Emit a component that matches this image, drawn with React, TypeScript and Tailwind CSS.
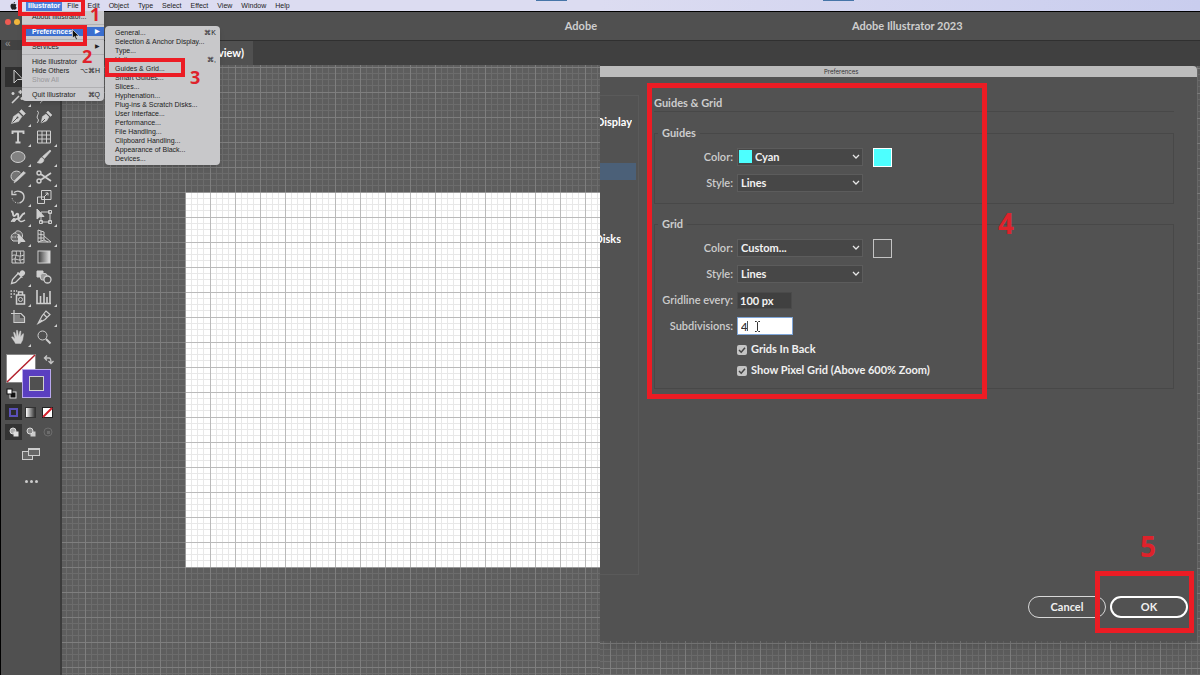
import type { ReactNode } from "react";

const menuBar = ["File", "Edit", "Object", "Type", "Select", "Effect", "View", "Window", "Help"];

const preferenceItems = [
  { label: "General...", keys: "⌘K" },
  { label: "Selection & Anchor Display..." },
  { label: "Type..." },
  { label: "Units...", keys: "⌘," },
  { label: "Guides & Grid..." },
  { label: "Smart Guides..." },
  { label: "Slices..." },
  { label: "Hyphenation..." },
  { label: "Plug-ins & Scratch Disks..." },
  { label: "User Interface..." },
  { label: "Performance..." },
  { label: "File Handling..." },
  { label: "Clipboard Handling..." },
  { label: "Appearance of Black..." },
  { label: "Devices..." },
];

const tools: { name: string; flyout?: boolean; active?: boolean; icon: ReactNode }[] = [
  { name: "Selection", active: true, icon: <path d="M5 2 L5 15 L8.5 11.5 L14 11.5 Z" /> },
  { name: "Direct Selection", icon: <path d="M5 2 L5 15 L8.5 11.5 L14 11.5 Z" fill="currentColor" /> },
  { name: "Magic Wand", flyout: true, icon: <path d="M3 15 L10 8 M11.5 2 v4 M9.5 4 h4 M4 4 v3 M2.5 5.5 h3 M13 9 v3 M11.5 10.5 h3" strokeWidth="1.6" /> },
  { name: "Lasso", icon: <path d="M6 11 C2 9 3 3 9 3 C15 3 16 9 11 10 C8 11 6 9 7 8 M6 11 C8 12 7 14 5 15" /> },
  {
    name: "Pen",
    flyout: true,
    icon: (
      <>
        <path d="M2.5 15.5 L4.5 8.5 L9.500 5 L13 8.500 L9.5 13.5 Z M10.500 3.500 L12.500 1.5 L16.5 5.500 L14.500 7.500 Z" fill="currentColor" strokeWidth="0.5" />
        <path d="M3.500 14.500 L8 10" stroke="#505050" />
        <circle cx="8.500" cy="9.500" r="1" fill="#505050" stroke="none" />
      </>
    ),
  },
  {
    name: "Curvature",
    icon: (
      <>
        <path d="M6 15 L7.500 8.500 L11 6 L14 9 L11.500 13 Z M11.500 4.500 L13 3 L17 7 L15.500 8.500 Z" fill="currentColor" strokeWidth="0.5" />
        <path d="M2 3 C6 4 0 9 3 11 C4 12 3 14 2 15" />
        <path d="M6.500 14.500 L10 11" stroke="#505050" />
      </>
    ),
  },
  { name: "Type", flyout: true, icon: <path d="M3.500 6 V3.500 H14.500 V6 M9 3.500 V14.500 M6.500 14.500 H11.500" strokeWidth="1.900" /> },
  { name: "Table", flyout: true, icon: <path d="M2.500 3 H15.500 V15 H2.500 Z M2.500 7 H15.500 M2.500 11 H15.500 M7 3 V15 M11.500 3 V15" /> },
  { name: "Ellipse", flyout: true, icon: <ellipse cx="9" cy="9" rx="7" ry="5.500" fill="#828282" /> },
  {
    name: "Paintbrush",
    flyout: true,
    icon: (
      <>
        <path d="M15 2 L7.500 8.500 L9.500 10.500 L16 3 Z" fill="currentColor" strokeWidth="0.6" />
        <path d="M7 9.500 C4.500 9.500 5 13 2 14.500 C6 16.500 9.500 14 8.800 11.200 Z" fill="currentColor" strokeWidth="0.5" />
      </>
    ),
  },
  {
    name: "Shaper",
    flyout: true,
    icon: (
      <>
        <path d="M11.500 5 C9 1.500 2 3 2 8.500 C2 11 4 13 6 13" fill="#747474" />
        <path d="M16.500 5 L8.500 12.500 L5 15 L6.500 11.500 L14.500 3.500 Z" fill="currentColor" strokeWidth="0.6" />
      </>
    ),
  },
  {
    name: "Scissors",
    flyout: true,
    icon: (
      <>
        <circle cx="4" cy="5" r="2" strokeWidth="1.400" />
        <circle cx="4" cy="13" r="2" strokeWidth="1.400" />
        <path d="M6 6.200 L16 13 M6 11.800 L16 5" strokeWidth="1.700" />
      </>
    ),
  },
  {
    name: "Rotate",
    flyout: true,
    icon: (
      <>
        <path d="M5 4.500 C9 1.500 15 4 15 9 C15 12 13 14 10.500 15" strokeWidth="1.400" />
        <path d="M9.500 15 C6 15 3.500 13 3 9.500" strokeDasharray="1 1.500" />
        <path d="M3 2.500 V6.500 H7.500" strokeWidth="1.400" />
      </>
    ),
  },
  { name: "Scale", flyout: true, icon: <path d="M6.500 2.500 H16 V11.500 H6.500 Z M2.500 9 H9.500 V15.500 H2.500 Z M9 9 L13 5 M10.500 5 H13 V7.500" /> },
  {
    name: "Width",
    flyout: true,
    icon: (
      <>
        <path d="M2 3.500 C5 3 3 7 5 8 C7 8 7 5 9 6 C10 8 8 10 10 11 C12 10 12 6 16 5" strokeWidth="1.900" />
        <path d="M2 13 C5 14 6 10 9 11 C10 13 12 15 16 12" strokeWidth="1.500" />
        <circle cx="5" cy="12" r="1.500" fill="currentColor" />
      </>
    ),
  },
  {
    name: "Free Transform",
    flyout: true,
    icon: (
      <>
        <path d="M6 4 H15 V14 H6 Z M13.500 2.500 h3 v3 h-3 Z M13.500 12.500 h3 v3 h-3 Z M4.500 12.500 h3 v3 h-3 Z" />
        <path d="M2 1 V11 L5 8.500 H9 Z" fill="currentColor" />
      </>
    ),
  },
  {
    name: "Shape Builder",
    flyout: true,
    icon: (
      <>
        <path d="M4 13 C0 10 3 5 6 5 C7 1 14 3 13.500 8 C13 11 11 13 9 13 Z" fill="#686868" />
        <path d="M6 5 C9 5 10 8 9 10 M3 9 H9" strokeDasharray="1.500 1" />
        <path d="M9.500 6 V16 L12 13.500 H16 Z" fill="currentColor" />
      </>
    ),
  },
  { name: "Perspective Grid", flyout: true, icon: <path d="M3 2 L9 4 V12 L3 14 Z M6 3 V13 M3 6 L9 7 M3 10 L9 10 M3 14 H16 L9 8 M9 12 L13 14" /> },
  { name: "Mesh", icon: <path d="M3 3 H15 V15 H3 Z M3 8 C6 5 8 10 15 7 M3 12 C7 9 9 14 15 11 M7 3 C9 7 4 10 7 15 M11 3 C13 8 9 10 12 15" /> },
  {
    name: "Gradient",
    icon: (
      <>
        <defs>
          <linearGradient id="toolGradient">
            <stop offset="0" stopColor="#3a3a3a" />
            <stop offset="1" stopColor="#e6e6e6" />
          </linearGradient>
        </defs>
        <rect x="3" y="3" width="12" height="12" fill="url(#toolGradient)" />
      </>
    ),
  },
  {
    name: "Eyedropper",
    flyout: true,
    icon: (
      <>
        <path d="M9.500 5 L3.500 11.500 L2.500 15.500 L6.500 14.500 L12.500 8.500" strokeWidth="1.300" />
        <path d="M8.500 4.500 L13.500 9.500 M10.500 6.500 L12 4 C13 1.500 17 4.500 14.500 6.500 L12.500 8 Z" fill="currentColor" strokeWidth="1.700" />
      </>
    ),
  },
  {
    name: "Blend",
    icon: (
      <>
        <path d="M2 3 H8 V9 H2 Z" fill="currentColor" />
        <rect x="5.500" y="5.500" width="6.500" height="6.500" rx="2" fill="#9a9a9a" />
        <circle cx="12.500" cy="11.500" r="3.500" fill="#505050" strokeWidth="1.300" />
      </>
    ),
  },
  {
    name: "Symbol Sprayer",
    flyout: true,
    icon: (
      <>
        <path d="M7.500 7 H15.500 V16 H7.500 Z M9.500 7 V4 H13.500 V7" strokeWidth="1.500" />
        <circle cx="11.500" cy="11.500" r="2" />
        <path d="M1.500 3 h1.500 M4.500 3 h1.500 M7 3 h1.200 M1.500 6 h1.500 M4.500 6 h1.500 M1.500 9 h1.500" strokeWidth="1.600" />
      </>
    ),
  },
  { name: "Column Graph", flyout: true, icon: <path d="M2 2 V15.500 H16 M5.500 15 V8 M9 15 V5 M12 15 V9 M15 15 V3" strokeWidth="1.600" /> },
  {
    name: "Artboard",
    icon: (
      <>
        <path d="M5 2 V14.500 H15.500 V9 L12 5.500 H2" strokeWidth="1.200" />
        <path d="M6 6.500 H11 V10 H15 V14 H6 Z" fill="#828282" stroke="none" />
      </>
    ),
  },
  { name: "Slice", flyout: true, icon: <path d="M3 15.500 L7 8 L11 3 L15 6.500 L10 11.500 Z M8.500 6 L12 9.500 M3 15.500 L7 12" strokeWidth="1.200" /> },
  {
    name: "Hand",
    flyout: true,
    icon: <path d="M6.500 15.500 C5 12.500 3 10.500 2.500 9 C3.500 8 5 9.500 6 11 L4.500 4.500 C5.500 3.500 6 4.500 7.500 9 L7.500 2.500 C8.500 1.500 9 2.500 9.300 8.500 L11 3 C12.300 2.500 12 4 11.500 9 L14 5.500 C15 5.500 14.500 7 14 10 C14 13 12 14 12 15.500 Z" fill="currentColor" strokeWidth="0.4" />,
  },
  {
    name: "Zoom",
    icon: (
      <>
        <circle cx="7.500" cy="7.500" r="4.500" />
        <path d="M11 11 L15.500 15.500" strokeWidth="1.900" />
      </>
    ),
  },
];

function GridPattern({ id, x, y, minor, major }: { id: string; x: number; y: number; minor: string; major: string }) {
  return (
    <svg className="absolute inset-0 h-full w-full" aria-hidden="true">
      <defs>
        <pattern id={id} x={x} y={y} width="25" height="25" patternUnits="userSpaceOnUse">
          <path d="M6.500 0 V25 M12.500 0 V25 M18.500 0 V25 M0 6.500 H25 M0 12.500 H25 M0 18.500 H25" stroke={minor} />
          <path d="M0.500 0 V25 M0 0.500 H25" stroke={major} />
        </pattern>
      </defs>
      <rect width="100%" height="100%" fill={`url(#${id})`} />
    </svg>
  );
}

function MenuRow({ label, keys, disabled }: { label: string; keys?: string; disabled?: boolean }) {
  return (
    <button
      className={`flex h-[9px] w-full items-center justify-between whitespace-nowrap pl-[10px] pr-1 leading-[9px] ${
        disabled ? "text-[#98989b]" : "text-[#222]"
      }`}
    >
      <span>{label}</span>
      {keys && <span>{keys}</span>}
    </button>
  );
}

function MenuLine() {
  return (
    <div className="flex h-[6px] items-center">
      <hr className="w-full border-[#b0b0b3]" />
    </div>
  );
}

function AppMenu() {
  return (
    <div className="absolute left-[22px] top-[11px] w-[82px] rounded-b-sm bg-[#cacacd] pb-[2px] pt-px shadow-md">
      <MenuRow label="About Illustrator..." />
      <MenuLine />
      <button className="flex h-[9px] w-full items-center justify-between bg-[#3b6fd0] pl-[10px] pr-1 font-bold leading-[9px] text-white">
        <span>Preferences</span>
        <span className="text-[6px]">▶</span>
      </button>
      <MenuLine />
      <button className="flex h-[9px] w-full items-center justify-between pl-[10px] pr-1 leading-[9px] text-[#222]">
        <span>Services</span>
        <span className="text-[6px]">▶</span>
      </button>
      <MenuLine />
      <MenuRow label="Hide Illustrator" />
      <MenuRow label="Hide Others" keys="⌥⌘H" />
      <MenuRow label="Show All" disabled />
      <MenuLine />
      <MenuRow label="Quit Illustrator" keys="⌘Q" />
    </div>
  );
}

function Toolbar() {
  return (
    <aside className="w-[62px] shrink-0 border-l border-r-2 border-l-black border-r-[#3c3c3c] bg-[#505050] text-[#cfcfcf]">
      <div className="h-[10px] bg-[#424242] pl-1 text-[10px] leading-[8px] text-[#999]">«</div>
      <div className="grid grid-cols-[26px_26px] pl-1 pt-[17px]">
        {tools.map((tool) => (
          <button
            key={tool.name}
            aria-label={tool.name}
            className={`relative flex h-5 items-center justify-center ${tool.active ? "bg-[#303030]" : ""}`}
          >
            <svg viewBox="0 0 18 18" className="h-[18px] w-[18px]" fill="none" stroke="currentColor">
              {tool.icon}
            </svg>
            {tool.flyout && (
              <svg viewBox="0 0 3 3" className="absolute bottom-0 right-0 h-[3px] w-[3px]">
                <path d="M3 0 V3 H0 Z" fill="#cfcfcf" />
              </svg>
            )}
          </button>
        ))}
      </div>

      {/* Fill and stroke */}
      <svg viewBox="0 0 58 54" className="mt-[2px] h-[54px] w-[58px]" aria-label="Fill and stroke">
        <rect x="5.500" y="5.500" width="29" height="28" fill="#fff" stroke="#888" />
        <path d="M6 33 L34 6" stroke="#b3202c" strokeWidth="1.500" />
        <rect x="21.500" y="20.500" width="28" height="28" fill="#5a3fc0" stroke="#b9a8ee" />
        <rect x="28.500" y="27.500" width="14" height="14" fill="#505050" stroke="#d0d0d0" />
        <path d="M44 9 H48 Q50 9 50 14 M46 6.500 L43.500 9 L46 11.500 M47.500 12 L50 14.500 L52.500 12" fill="none" stroke="#c4c4c4" strokeWidth="1.400" />
        <rect x="9" y="43" width="6" height="6" fill="#111" stroke="#ddd" />
        <rect x="6" y="40" width="5" height="5" fill="#fff" stroke="#111" />
      </svg>

      {/* Color, gradient, none */}
      <div className="mt-px flex pl-1">
        <button aria-label="Color" className="flex h-4 w-[17px] items-center justify-center bg-[#2c2c2c]">
          <span className="h-[9px] w-[9px] border-2 border-[#5a50b8]" />
        </button>
        <button aria-label="Gradient" className="flex h-4 w-[17px] items-center justify-center">
          <span className="h-[11px] w-[11px] border border-[#333] bg-linear-to-r from-white to-[#333]" />
        </button>
        <button aria-label="None" className="flex h-4 w-[17px] items-center justify-center">
          <svg viewBox="0 0 11 11" className="h-[11px] w-[11px]">
            <rect x="0.500" y="0.500" width="10" height="10" fill="#fff" stroke="#222" />
            <path d="M1 10 L10 1" stroke="#d5202c" strokeWidth="2" />
          </svg>
        </button>
      </div>

      {/* Drawing modes */}
      <div className="mt-1 flex pl-1">
        <button aria-label="Draw Normal" className="flex h-4 w-[17px] items-center justify-center bg-[#333]">
          <svg viewBox="0 0 10 10" className="h-[10px] w-[10px]">
            <circle cx="4" cy="4" r="3" fill="#aaa" stroke="#ddd" />
            <rect x="4.500" y="4.500" width="5" height="5" fill="#ddd" />
          </svg>
        </button>
        <button aria-label="Draw Behind" className="flex h-4 w-[17px] items-center justify-center">
          <svg viewBox="0 0 10 10" className="h-[10px] w-[10px]">
            <rect x="4.500" y="4.500" width="5" height="5" fill="#ccc" />
            <circle cx="4" cy="4" r="3" fill="#888" stroke="#ddd" />
          </svg>
        </button>
        <button aria-label="Draw Inside" className="flex h-4 w-[17px] items-center justify-center opacity-20">
          <svg viewBox="0 0 10 10" className="h-[10px] w-[10px]">
            <circle cx="5" cy="5" r="4" fill="none" stroke="#ddd" />
            <rect x="4" y="4" width="3" height="3" fill="#ddd" />
          </svg>
        </button>
      </div>

      <button aria-label="Change Screen Mode" className="ml-5 mt-[6px] block">
        <svg viewBox="0 0 20 16" className="h-4 w-5">
          <rect x="1.500" y="5.500" width="10" height="8" fill="#666" stroke="#ccc" />
          <rect x="7.500" y="2.500" width="11" height="7" fill="#666" stroke="#ccc" />
          <path d="M7 3 H19" stroke="#ccc" strokeWidth="2" />
        </svg>
      </button>
      <button aria-label="Edit Toolbar" className="ml-6 mt-4 flex gap-[2px] py-[2px]">
        <span className="h-[3px] w-[3px] rounded-full bg-[#ccc]" />
        <span className="h-[3px] w-[3px] rounded-full bg-[#ccc]" />
        <span className="h-[3px] w-[3px] rounded-full bg-[#ccc]" />
      </button>
    </aside>
  );
}

function Callout({ className, children }: { className: string; children: ReactNode }) {
  return <span className={`absolute font-['Open_Sans',sans-serif] font-bold leading-none text-[#de222b] ${className}`}>{children}</span>;
}

function Workspace() {
  return (
    <section className="relative flex flex-1 flex-col overflow-hidden font-['Liberation_Sans',sans-serif] text-[7px] text-[#222]">
      <nav className="flex h-[11px] items-center bg-[#dcdcf1] pl-[10px] leading-[11px]">
        <svg viewBox="0 0 14 16" className="mr-[9px] h-2 w-[7px]" aria-label="Apple">
          <path d="M10 0 C8 0 7 2 7 3.500 C9 3.500 10 2 10 0 Z M7 4.500 C5 3 1 3.500 1 8 C1 12 4 16 5.500 15.500 C7 15 8 15 9 15.500 C11 16 13 13 13.500 11.500 C11 10 11 7 13 5.500 C11.500 3.500 9 3.800 7 4.500 Z" fill="#222" />
        </svg>
        <button className="bg-[#4a7bdc] px-[2px] font-bold text-white">Illustrator</button>
        {menuBar.map((item) => (
          <button key={item} className="ml-px px-1 first-of-type:ml-0">
            {item}
          </button>
        ))}
        <span className="absolute left-[536px] top-0 h-px w-[31px] bg-[#4675a8]" />
      </nav>

      <header className="flex h-[29px] items-center border-t border-black bg-[#505050] pl-[5px] pr-[3px]">
        <span className="mb-2 h-[6px] w-[6px] rounded-full bg-[#ee5a52]" />
        <span className="mb-2 ml-[3px] h-[6px] w-[6px] rounded-full bg-[#f2b63c]" />
        <h1 className="ml-auto font-['Lato',sans-serif] text-[11px] font-bold text-[#cecece]">Adobe</h1>
      </header>

      <div className="flex flex-1">
        <Toolbar />
        <main className="flex min-w-0 flex-1 flex-col">
          <div className="flex h-[25px] border-t border-[#303030] bg-[#404040]">
            <div className="flex w-[191px] items-center justify-end bg-[#505050] pr-[9px] font-['Lato',sans-serif] text-[11px] font-bold text-white">
              view)
            </div>
          </div>
          <div className="relative flex-1 bg-[#5e5e5e] pl-[123px] pt-[127px]">
            <GridPattern id="canvasGrid" x={-2} y={2} minor="#6c6c6c" major="#7e7e7e" />
            <div className="relative h-[376px] border border-r-0 border-[#999] bg-white">
              <GridPattern id="artboardGrid" x={-1} y={-1} minor="#e8e8e8" major="#bababa" />
            </div>
          </div>
        </main>
      </div>

      <AppMenu />
      <div className="absolute left-[105px] top-[26px] w-[115px] rounded-sm bg-[#c8c8ca] py-[2px] shadow-md">
        {preferenceItems.map((item) => (
          <MenuRow key={item.label} label={item.label} keys={item.keys} />
        ))}
      </div>

      {/* Step markers */}
      <div className="absolute -top-[2px] left-[18px] h-[18px] w-[67px] border-4 border-[#ec1c24]" />
      <Callout className="left-[90px] top-[5px] text-[18px]">1</Callout>
      <div className="absolute left-[22px] top-[25px] h-[21px] w-[65px] border-4 border-[#ec1c24]" />
      <Callout className="left-[82px] top-[47px] text-[18px]">2</Callout>
      <div className="absolute left-[105px] top-[58px] h-[19px] w-[80px] border-4 border-[#ec1c24]" />
      <Callout className="left-[190px] top-[68px] text-[18px]">3</Callout>
      <svg viewBox="0 0 8 12" className="absolute left-[72px] top-[29px] h-3 w-2" aria-hidden="true">
        <path d="M0.500 0.500 V9 L2.500 7.500 L4 11 L5.500 10.300 L4 7 H7 Z" fill="#111" stroke="#ddd" strokeWidth="0.700" />
      </svg>
    </section>
  );
}

function SelectRow({ id, label, value, swatch, children }: { id: string; label: string; value: string; swatch?: boolean; children?: ReactNode }) {
  return (
    <div className="flex h-[26px] items-center">
      <label htmlFor={id} className="mr-1 w-[78px] text-right">
        {label}
      </label>
      <div className="relative">
        <select
          id={id}
          className={`block h-[18px] w-[126px] appearance-none border border-[#5c5c5c] bg-[#474747] font-bold leading-4 text-[#f2f2f2] ${
            swatch ? "pl-[17px]" : "pl-[3px]"
          }`}
        >
          <option>{value}</option>
        </select>
        {swatch && <span className="absolute left-[2px] top-[2px] h-[13px] w-[13px] bg-[#4dffff]" />}
        <svg viewBox="0 0 8 6" className="pointer-events-none absolute right-[3px] top-[6px] h-[6px] w-2" fill="none">
          <path d="M1 1 L4 4 L7 1" stroke="#e6e6e6" strokeWidth="1.300" />
        </svg>
      </div>
      {children}
    </div>
  );
}

function CheckRow({ label }: { label: string }) {
  return (
    <label className="ml-[82px] flex h-[21px] items-center font-bold text-[#f0f0f0]">
      <span className="relative mr-1 h-[10px] w-[10px]">
        <input type="checkbox" defaultChecked className="block h-[10px] w-[10px] appearance-none rounded-xs bg-[#c4c4c4]" />
        <svg viewBox="0 0 10 10" className="pointer-events-none absolute inset-0" fill="none">
          <path d="M2 5 L4.200 7.200 L8 2.800" stroke="#444" strokeWidth="1.500" />
        </svg>
      </span>
      {label}
    </label>
  );
}

function PreferencesDialog() {
  return (
    <div className="mr-[3px] flex flex-1 flex-col bg-[#525252] text-[11px] font-semibold text-[#cdcdcd] shadow-lg">
      <div className="h-[11px] rounded-tr-sm bg-[#bcbcbc] pl-[224px] font-['Inter',sans-serif] text-[6px] font-normal leading-[11px] text-[#333]">Preferences</div>
      <div className="flex flex-1">
        {/* Section list, scrolled off to the left */}
        <div className="mt-[18px] h-[480px] w-[39px] shrink-0 border border-l-0 border-[#5a5a5a] font-bold text-white">
          <div className="mt-[18px] flex h-4 w-8 items-center justify-end overflow-hidden">Display</div>
          <div className="mt-[33px] h-[17px] w-9 bg-[#4b6078]" />
          <div className="mt-[51px] flex h-4 w-[21px] items-center justify-end overflow-hidden">Disks</div>
        </div>

        <div className="relative flex min-w-0 flex-1 flex-col pl-[15px] pr-[9px]">
          <h2 className="mt-[18px] h-4 font-bold leading-4">Guides &amp; Grid</h2>
          <hr className="mr-[14px] border-[#484848]" />

          <fieldset className="mr-[14px] mt-[13px] h-[79px] border border-[#484848]">
            <legend className="mb-[3px] ml-[3px] px-1 font-bold leading-4">Guides</legend>
            <SelectRow id="guides-color" label="Color:" value="Cyan" swatch>
              <button aria-label="Guide color" className="ml-[10px] h-[19px] w-[19px] border border-white bg-[#4dffff]" />
            </SelectRow>
            <SelectRow id="guides-style" label="Style:" value="Lines" />
          </fieldset>

          <fieldset className="mr-[14px] mt-[12px] h-[173px] border border-[#484848]">
            <legend className="mb-[3px] ml-[3px] px-1 font-bold leading-4">Grid</legend>
            <SelectRow id="grid-color" label="Color:" value="Custom...">
              <button aria-label="Grid color" className="ml-[10px] h-[19px] w-[19px] border border-[#c4c4c4] bg-[#555]" />
            </SelectRow>
            <SelectRow id="grid-style" label="Style:" value="Lines" />
            <div className="flex h-[26px] items-center">
              <label htmlFor="gridline" className="mr-1 w-[78px] whitespace-nowrap text-right">
                Gridline every:
              </label>
              <input id="gridline" defaultValue="100 px" className="h-[17px] w-[55px] border border-[#4a4a4a] bg-[#404040] pl-[2px] font-bold text-[#f2f2f2]" />
            </div>
            <div className="flex h-[26px] items-center">
              <label htmlFor="subdivisions" className="mr-1 w-[78px] text-right">
                Subdivisions:
              </label>
              <div className="relative">
                <input id="subdivisions" defaultValue="4" className="block h-[18px] w-[56px] border border-[#7fa6d8] bg-white pl-[3px] text-[#333]" />
                <span className="absolute left-[10px] top-[4px] h-[10px] w-px bg-[#555]" />
                <svg viewBox="0 0 7 11" className="absolute left-[17px] top-[4px] h-[11px] w-[7px]" fill="none">
                  <path d="M1 0.500 H2.500 L3.500 1.500 L4.500 0.500 H6 M3.500 1.500 V9.500 M1 10.500 H2.500 L3.500 9.500 L4.500 10.500 H6" stroke="#333" />
                </svg>
              </div>
            </div>
            <CheckRow label="Grids In Back" />
            <CheckRow label="Show Pixel Grid (Above 600% Zoom)" />
          </fieldset>

          <div className="mb-[23px] mt-auto flex justify-end gap-1">
            <button className="h-[22px] w-[78px] rounded-full border border-[#d8d8d8] font-bold text-[#f0f0f0]">Cancel</button>
            <button className="h-[22px] w-[78px] rounded-full border-2 border-white font-bold text-[#f0f0f0]">OK</button>
          </div>

          {/* Step markers */}
          <div className="pointer-events-none absolute left-2 top-[6px] h-[316px] w-[340px] border-5 border-[#ec1c24]" />
          <Callout className="left-[359px] top-[132px] text-[28px]">4</Callout>
          <div className="pointer-events-none absolute bottom-2 right-[3px] h-[62px] w-[99px] border-5 border-[#ec1c24]" />
          <Callout className="bottom-[81px] right-[41px] text-[28px]">5</Callout>
        </div>
      </div>
    </div>
  );
}

function PreferencesView() {
  return (
    <section className="relative flex flex-1 flex-col overflow-hidden font-['Lato',sans-serif]">
      <div className="h-[11px] bg-linear-to-r from-[#dcdcf1] to-[#c9cdee]">
        <span className="absolute left-[223px] top-0 h-px w-[31px] bg-[#4675a8]" />
      </div>
      <header className="flex h-[29px] items-center border-t border-black bg-[#505050] pl-[252px] text-[11px] font-bold text-[#cecece]">
        Adobe Illustrator 2023
      </header>
      <div className="h-[26px] border-t border-[#303030] bg-[#404040]" />
      <div className="relative flex flex-1 flex-col bg-[#5e5e5e] pb-[34px]">
        <GridPattern id="backdropGrid" x={10} y={2} minor="#6c6c6c" major="#7e7e7e" />
        <div className="relative flex flex-1 flex-col">
          <PreferencesDialog />
        </div>
      </div>
    </section>
  );
}

export default function App() {
  return (
    <div className="flex min-h-screen bg-[#505050]">
      <Workspace />
      <PreferencesView />
    </div>
  );
}
